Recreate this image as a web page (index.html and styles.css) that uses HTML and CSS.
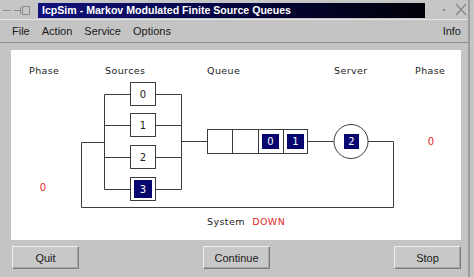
FILE: index.html
```html
<!DOCTYPE html>
<html lang="en">
<head>
  <meta charset="UTF-8" />
  <title>IcpSim - Markov Modulated Finite Source Queues</title>
  <link rel="stylesheet" href="styles.css">
</head>
<body>
  <div class="window">
    <div class="titlebar">
      <span class="wm-left">
        <svg width="34" height="19" viewBox="0 0 34 19">
          <line x1="3" y1="10.5" x2="11" y2="10.5" stroke="#8a8a8a" />
          <line x1="14" y1="10.5" x2="20" y2="10.5" stroke="#8a8a8a" />
          <rect x="22.5" y="6.5" width="7" height="8" fill="none" stroke="#8a8a8a" />
          <line x1="20.5" y1="7" x2="20.5" y2="14" stroke="#8a8a8a" />
        </svg>
      </span>
      <div class="title">IcpSim - Markov Modulated Finite Source Queues</div>
      <span class="wm-right">
        <svg width="37" height="19" viewBox="0 0 37 19">
          <rect x="12" y="9" width="2" height="2" fill="#8a8a8a" />
          <line x1="25" y1="4" x2="35" y2="15" stroke="#8a8a8a" stroke-width="1.3" />
          <line x1="35" y1="4" x2="25" y2="15" stroke="#8a8a8a" stroke-width="1.3" />
        </svg>
      </span>
    </div>

    <div class="menubar">
      <span>File</span>
      <span>Action</span>
      <span>Service</span>
      <span>Options</span>
      <span class="info">Info</span>
    </div>

    <div class="content">
      <div class="panel">
        <svg class="diagram" width="450" height="190" viewBox="11 51 450 190">
          <g class="label">
            <text x="29" y="75">Phase</text>
            <text x="105" y="75">Sources</text>
            <text x="207" y="75">Queue</text>
            <text x="334" y="75">Server</text>
            <text x="415" y="75">Phase</text>
          </g>

          <!-- wiring -->
          <g class="wire">
            <polyline points="130,95.5 104.5,95.5 104.5,190.5 130,190.5" />
            <line x1="104.5" y1="126.5" x2="130" y2="126.5" />
            <line x1="104.5" y1="158.5" x2="130" y2="158.5" />
            <polyline points="156,95.5 181.5,95.5 181.5,190.5 156,190.5" />
            <line x1="156" y1="126.5" x2="181.5" y2="126.5" />
            <line x1="156" y1="158.5" x2="181.5" y2="158.5" />
            <line x1="181.5" y1="142.5" x2="207" y2="142.5" />
            <polyline points="104.5,143.5 81.5,143.5 81.5,208.5 393.5,208.5 393.5,142.5 368,142.5" />
            <line x1="308" y1="142.5" x2="334" y2="142.5" />
          </g>

          <!-- sources -->
          <g class="box">
            <rect x="130.5" y="83.5" width="25" height="23" />
            <rect x="130.5" y="114.5" width="25" height="23" />
            <rect x="130.5" y="146.5" width="25" height="23" />
            <rect x="130.5" y="178.5" width="25" height="23" />
          </g>
          <rect class="job" x="134" y="181" width="18" height="18" />
          <g class="num">
            <text x="143" y="99">0</text>
            <text x="143" y="130">1</text>
            <text x="143" y="162">2</text>
            <text x="143" y="194" class="on">3</text>
          </g>

          <!-- queue -->
          <g class="box">
            <rect x="207.5" y="130.5" width="100" height="24" />
            <line x1="232.5" y1="130.5" x2="232.5" y2="154.5" />
            <line x1="258.5" y1="130.5" x2="258.5" y2="154.5" />
            <line x1="283.5" y1="130.5" x2="283.5" y2="154.5" />
          </g>
          <rect class="job" x="262" y="135" width="17" height="15" />
          <rect class="job" x="287" y="135" width="17" height="15" />
          <g class="num">
            <text x="270.5" y="146" class="on">0</text>
            <text x="295.5" y="146" class="on">1</text>
          </g>

          <!-- server -->
          <circle class="box" cx="351" cy="142.5" r="17" />
          <rect class="job" x="344" y="135" width="15" height="15" />
          <text class="num on" x="351.5" y="146">2</text>

          <!-- phases -->
          <g class="phase">
            <text x="43" y="192">0</text>
            <text x="431" y="146">0</text>
          </g>

          <text class="label" x="207" y="226">System <tspan class="down" dx="4">DOWN</tspan></text>
        </svg>
      </div>

      <div class="buttons">
        <button>Quit</button>
        <button>Continue</button>
        <button>Stop</button>
      </div>
    </div>
  </div>
</body>
</html>
```

FILE: styles.css
```css
body {
  margin: 0;
  padding: 0;
  width: 474px;
  height: 277px;
  overflow: hidden;
  background-color: #c4c4c4;
  font-family: "Liberation Sans", Arial, sans-serif;
}
.window {
  width: 468px;
  height: 277px;
  border-right: 2px solid #9c9c9c;
  display: flex;
  flex-direction: column;
}
.titlebar {
  height: 19px;
  display: flex;
  align-items: center;
  background-color: #c6c6c6;
}
.wm-left {
  width: 38px;
  height: 19px;
}
.wm-right {
  width: 37px;
  height: 19px;
  margin-left: auto;
}
.title {
  width: 387px;
  height: 15px;
  margin-top: 1px;
  padding-left: 4px;
  box-sizing: border-box;
  background: linear-gradient(to right, #12127e, #04043a 55%, #000008);
  color: white;
  font-weight: bold;
  font-size: 10.6px;
  line-height: 15px;
  white-space: nowrap;
  overflow: hidden;
}
.menubar {
  height: 22px;
  display: flex;
  align-items: center;
  gap: 12px;
  padding-left: 12px;
  padding-right: 7px;
  border-top: 1px solid #e4e4e4;
  border-bottom: 1px solid #8c8c8c;
  background-color: #c4c4c4;
  font-size: 11px;
  color: #1a1a1a;
}
.menubar .info {
  margin-left: auto;
}
.content {
  flex: 1;
  padding: 7px 7px 0 11px;
}
.panel {
  width: 450px;
  height: 190px;
  background-color: white;
}
.diagram {
  display: block;
}
.label {
  font-family: "DejaVu Sans", sans-serif;
  font-size: 9.5px;
  fill: #222;
  letter-spacing: 0.4px;
}
.wire {
  fill: none;
  stroke: #3c3c3c;
  stroke-width: 1;
}
.box {
  fill: white;
  stroke: #3c3c3c;
  stroke-width: 1;
}
.job {
  fill: #06066e;
}
.num {
  font-family: "DejaVu Sans", sans-serif;
  font-size: 10px;
  fill: #222;
  text-anchor: middle;
}
.num .on,
.num.on {
  fill: white;
}
.phase {
  font-family: "DejaVu Sans", sans-serif;
  font-size: 10px;
  fill: #e02828;
  text-anchor: middle;
}
.down {
  fill: #e02828;
}
.buttons {
  display: flex;
  justify-content: space-between;
  margin-top: 6px;
  padding-left: 1px;
  padding-right: 0;
}
button {
  width: 67px;
  height: 23px;
  padding: 0;
  background-color: #c8c8c8;
  border: 1px solid;
  border-color: #eeeeee #7c7c7c #7c7c7c #eeeeee;
  box-shadow: inset -1px -1px 0 #a4a4a4;
  font-family: "Liberation Sans", Arial, sans-serif;
  font-size: 11px;
  color: #1a1a1a;
}
```
